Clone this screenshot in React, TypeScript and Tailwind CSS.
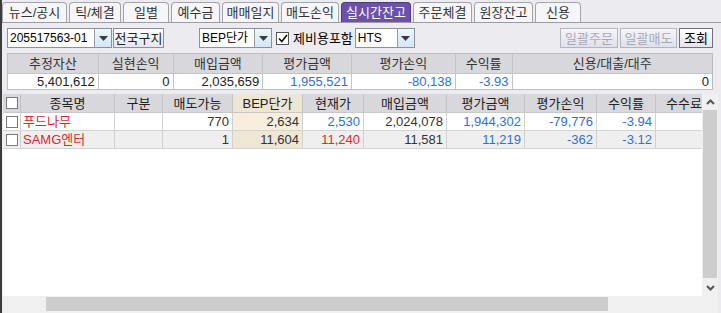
import React from "react";

const tabs = [
  { label: "뉴스/공시", w: "w-[65px]" },
  { label: "틱/체결", w: "w-[52px]" },
  { label: "일별", w: "w-[46px]" },
  { label: "예수금", w: "w-[49px]" },
  { label: "매매일지", w: "w-[57px]" },
  { label: "매도손익", w: "w-[58px]" },
  { label: "실시간잔고", w: "w-[70px]", active: true },
  { label: "주문체결", w: "w-[59px]" },
  { label: "원장잔고", w: "w-[59px]" },
  { label: "신용", w: "w-[46px]" },
];

const summaryCols = [
  { head: "추정자산", value: "5,401,612", w: "w-[90px]", tone: "" },
  { head: "실현손익", value: "0", w: "w-[75px]", tone: "" },
  { head: "매입금액", value: "2,035,659", w: "w-[90px]", tone: "" },
  { head: "평가금액", value: "1,955,521", w: "w-[89px]", tone: "text-[#2f6fd8]" },
  { head: "평가손익", value: "-80,138", w: "w-[104px]", tone: "text-[#2f6fd8]" },
  { head: "수익률", value: "-3.93", w: "w-[57px]", tone: "text-[#2f6fd8]" },
  { head: "신용/대출/대주", value: "0", w: "w-[201px]", tone: "" },
];

const gridCols = [
  { head: "종목명", w: "w-[94px]" },
  { head: "구분", w: "w-[48px]" },
  { head: "매도가능", w: "w-[70px]" },
  { head: "BEP단가", w: "w-[70px]", bep: true },
  { head: "현재가", w: "w-[61px]" },
  { head: "매입금액", w: "w-[83px]" },
  { head: "평가금액", w: "w-[78px]" },
  { head: "평가손익", w: "w-[72px]" },
  { head: "수익률", w: "w-[59px]" },
  { head: "수수료", w: "w-[46px]" },
];

type Cell = { text: string; tone?: string };

const rows: { bg: string; cells: Cell[] }[] = [
  {
    bg: "bg-white",
    cells: [
      { text: "푸드나무", tone: "text-[#e0282e]" },
      { text: "" },
      { text: "770" },
      { text: "2,634" },
      { text: "2,530", tone: "text-[#2f6fd8]" },
      { text: "2,024,078" },
      { text: "1,944,302", tone: "text-[#2f6fd8]" },
      { text: "-79,776", tone: "text-[#2f6fd8]" },
      { text: "-3.94", tone: "text-[#2f6fd8]" },
      { text: "" },
    ],
  },
  {
    bg: "bg-[#efefef]",
    cells: [
      { text: "SAMG엔터", tone: "text-[#e0282e]" },
      { text: "" },
      { text: "1" },
      { text: "11,604" },
      { text: "11,240", tone: "text-[#e0282e]" },
      { text: "11,581" },
      { text: "11,219", tone: "text-[#2f6fd8]" },
      { text: "-362", tone: "text-[#2f6fd8]" },
      { text: "-3.12", tone: "text-[#2f6fd8]" },
      { text: "" },
    ],
  },
];

function DropButton() {
  return (
    <div className="flex h-full w-[17px] items-center justify-center border-l border-[#9a9aa8] bg-gradient-to-b from-[#eef5fc] to-[#d4e6f7]">
      <svg width="9" height="5" viewBox="0 0 9 5">
        <polygon points="0,0 9,0 4.5,5" fill="#3a3a3a" />
      </svg>
    </div>
  );
}

function Combo({ text, w }: { text: string; w: string }) {
  return (
    <div className={`flex h-[20px] ${w} items-stretch border border-[#8e8e9c] bg-white`}>
      <div className="flex flex-1 items-center overflow-hidden whitespace-nowrap pl-[2px] text-[12px] leading-none text-black">
        {text}
      </div>
      <DropButton />
    </div>
  );
}

function Box() {
  return <div className="h-[12px] w-[12px] border border-[#7a7a7a] bg-white" />;
}

export default function App() {
  return (
    <div
      className="relative flex h-[313px] w-[721px] flex-col overflow-hidden border-l-2 border-[#3c3c3c] bg-[#ebebf0] text-[12px] text-[#222]"
      style={{ fontFamily: '"Liberation Sans", "Noto Sans CJK KR", sans-serif' }}
    >
      {/* tabs */}
      <div className="flex h-[23px] shrink-0 items-end gap-[2px] border-b border-[#9c9ca6]">
        {tabs.map((t) => (
          <div
            key={t.label}
            className={`flex h-[20px] ${t.w} items-center justify-center rounded-t-[4px] border border-b-0 text-[13px] leading-none ${
              t.active
                ? "border-[#4d3a86] bg-[#6b51aa] text-white"
                : "border-[#a4a4ae] bg-[#f6f6f9] text-[#333]"
            }`}
          >
            {t.label}
          </div>
        ))}
      </div>

      {/* toolbar */}
      <div className="mt-[5px] flex h-[20px] shrink-0 items-center pl-[5px]">
        <Combo text="205517563-01" w="w-[105px]" />
        <div className="ml-[1px] flex h-[20px] w-[51px] items-center justify-center border border-[#8e8e9c] bg-gradient-to-b from-white to-[#e6e6ec] text-[13px] leading-none">
          전국구지
        </div>
        <div className="ml-[35px]">
          <Combo text="BEP단가" w="w-[73px]" />
        </div>
        <div className="ml-[4px] flex h-[13px] w-[13px] items-center justify-center border border-[#555] bg-white">
          <svg width="10" height="9" viewBox="0 0 10 9">
            <polyline points="1,4.5 3.8,7.5 9,1" fill="none" stroke="#111" strokeWidth="1.6" />
          </svg>
        </div>
        <span className="ml-[4px] text-[13px] leading-none text-black">제비용포함</span>
        <div className="ml-[2px]">
          <Combo text="HTS" w="w-[60px]" />
        </div>
        <div className="ml-auto mr-[8px] flex gap-[2px]">
          <div className="flex h-[20px] w-[58px] items-center justify-center border border-[#b4b4c4] bg-gradient-to-b from-[#f7f7fa] to-[#dfe0e8] text-[13px] leading-none text-[#a8a8b8]">
            일괄주문
          </div>
          <div className="flex h-[20px] w-[57px] items-center justify-center border border-[#b4b4c4] bg-gradient-to-b from-[#f7f7fa] to-[#dfe0e8] text-[13px] leading-none text-[#a8a8b8]">
            일괄매도
          </div>
          <div className="flex h-[20px] w-[34px] items-center justify-center border border-[#6e6e7c] bg-gradient-to-b from-white to-[#e4e4ea] text-[13px] leading-none text-black">
            조회
          </div>
        </div>
      </div>

      {/* summary */}
      <div className="ml-[5px] mt-[5px] flex w-[706px] shrink-0 border border-[#bdbdc4]">
        {summaryCols.map((c, i) => (
          <div key={c.head} className={`flex ${c.w} flex-col ${i > 0 ? "border-l border-[#c4c4c8]" : ""}`}>
            <div className="flex h-[19px] items-center justify-center bg-[#d8d8dc] text-[13px] leading-none text-[#333]">
              {c.head}
            </div>
            <div
              className={`flex h-[16px] items-center justify-end border-t border-[#c4c4c8] bg-white pr-[3px] text-[13px] leading-none ${
                c.tone || "text-[#222]"
              }`}
            >
              {c.value}
            </div>
          </div>
        ))}
      </div>

      {/* main grid */}
      <div className="ml-[1px] mt-[4px] flex min-h-0 flex-1">
        <div className="flex w-[699px] flex-col">
          <div className="flex-1 bg-white">
            <div className="flex h-[19px] border-b border-[#c8c8c8] bg-[#d8d8dc]">
              <div className="flex w-[18px] items-center justify-center border-r border-[#c4c4c8]">
                <Box />
              </div>
              {gridCols.map((c, i) => (
                <div
                  key={c.head}
                  className={`flex ${c.w} items-center justify-center overflow-hidden whitespace-nowrap text-[13px] leading-none text-[#222] ${
                    i < gridCols.length - 1 ? "border-r border-[#c4c4c8]" : "justify-end"
                  } ${c.bep ? "bg-[#eee5d2]" : ""}`}
                >
                  {c.head}
                </div>
              ))}
            </div>
            {rows.map((r, ri) => (
              <div key={ri} className={`flex h-[18px] border-b border-[#d4d4d4] ${r.bg}`}>
                <div className="flex w-[18px] items-center justify-center border-r border-[#d0d0d0]">
                  <Box />
                </div>
                {r.cells.map((cell, ci) => (
                  <div
                    key={ci}
                    className={`flex ${gridCols[ci].w} items-center overflow-hidden whitespace-nowrap text-[13px] leading-none ${
                      ci === 0 ? "justify-start pl-[2px]" : "justify-end pr-[3px]"
                    } ${ci < gridCols.length - 1 ? "border-r border-[#d0d0d0]" : ""} ${
                      gridCols[ci].bep ? (ri === 0 ? "bg-[#f7efdc]" : "bg-[#efe7d5]") : ""
                    } ${cell.tone || "text-[#333]"}`}
                  >
                    {cell.text}
                  </div>
                ))}
              </div>
            ))}
          </div>
          {/* horizontal scrollbar */}
          <div className="flex h-[17px] shrink-0 bg-[#f0f0f0] pt-[1px]">
            <div className="ml-[43px] h-[14px] w-[562px] bg-[#cdcdcd]" />
          </div>
        </div>
        {/* vertical scrollbar */}
        <div className="flex w-[16px] flex-col bg-[#f0f0f0] pb-[17px]">
          <div className="flex h-[16px] items-center justify-center">
            <svg width="9" height="6" viewBox="0 0 9 6">
              <polyline points="1,5 4.5,1.5 8,5" fill="none" stroke="#555" strokeWidth="2" />
            </svg>
          </div>
          <div className="mx-[1px] flex-1 bg-[#cdcdcd]" />
          <div className="mt-[2px] flex h-[16px] items-center justify-center">
            <svg width="9" height="6" viewBox="0 0 9 6">
              <polyline points="1,1 4.5,4.5 8,1" fill="none" stroke="#555" strokeWidth="2" />
            </svg>
          </div>
        </div>
      </div>
    </div>
  );
}
